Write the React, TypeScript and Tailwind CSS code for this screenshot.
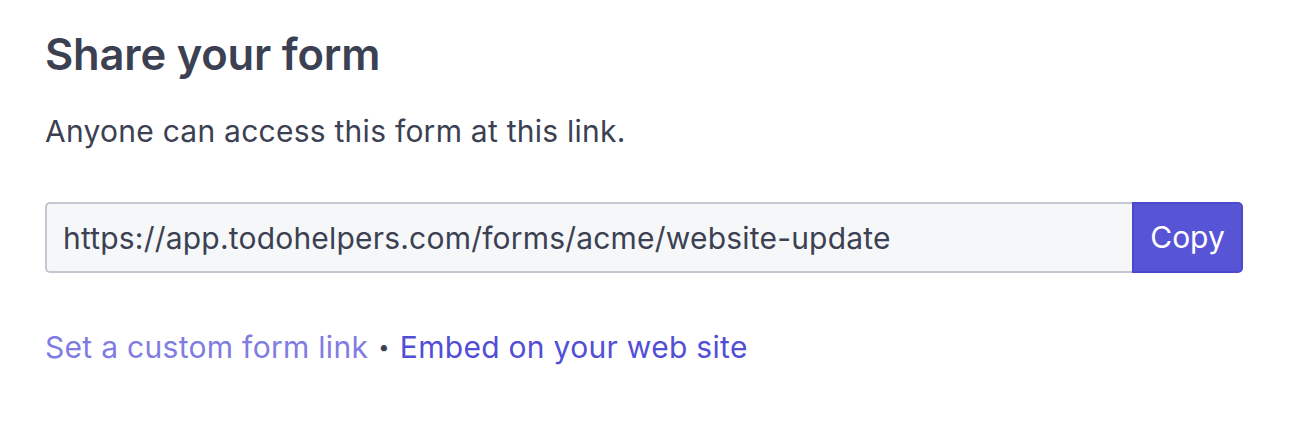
export default function App() {
  const url = "https://app.todohelpers.com/forms/acme/website-update";

  return (
    <div className="min-h-[430px] bg-white px-[45px] pt-[24px] font-['Inter',sans-serif] text-[#3b4152]">
      <h2 className="text-[43.5px] leading-[60px] font-semibold tracking-[-0.2px]">Share your form</h2>
      <p className="mt-[27px] text-[30px] leading-[40px] tracking-[0.25px]">Anyone can access this form at this link.</p>

      <div className="mt-[51px] flex w-[1198px]">
        <input
          type="text"
          readOnly
          value={url}
          className="h-[71px] flex-1 rounded-l-[5px] border-2 border-r-0 border-[#c3c7cf] bg-[#f6f7f9] px-[16px] text-[30px] tracking-[0.2px] text-[#3b4152] outline-none"
        />
        <button
          type="button"
          className="h-[71px] w-[111px] rounded-r-[5px] border-2 border-[#4d49cf] bg-[#5854d6] text-[30px] text-white"
        >
          Copy
        </button>
      </div>

      <div className="mt-[54px] flex items-center text-[30px] leading-[40px] tracking-[0.3px]">
        <a href="#" className="text-[#7f7ce2]">Set a custom form link</a>
        <span className="mx-[10px] text-[20px] text-[#3b4152]">•</span>
        <a href="#" className="text-[#524ed5]">Embed on your web site</a>
      </div>
    </div>
  );
}
